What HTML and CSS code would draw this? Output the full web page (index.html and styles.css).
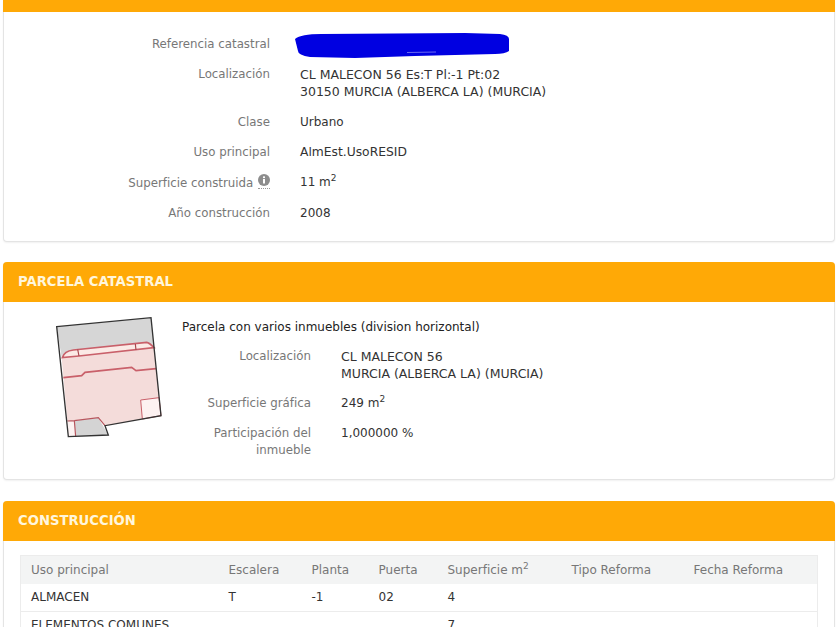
FILE: index.html
```html
<!DOCTYPE html>
<html lang="es">
<head>
    <meta charset="UTF-8">
    <meta name="viewport" content="width=device-width, initial-scale=1.0">
    <title>Sede Catastro</title>
    <link rel="stylesheet" href="styles.css">
</head>
<body>
    <section class="card card-first">
        <div class="card-header card-header-cut"></div>
        <div class="data-list data-list-main">
            <div class="data-row">
                <div class="data-label">Referencia catastral</div>
                <div class="data-value">
                    <svg class="scribble" width="216" height="25" viewBox="0 0 216 25">
                        <path d="M0 6 Q6 1 26 1 L170 0 L205 1 Q214 2 214 6 L214 18 Q210 21 200 21 L120 23 L60 25 L15 24 Q3 22 3 18 Z" fill="#0000e1"/>
                        <path d="M112 19.5 L141 19" stroke="#6a6af0" stroke-width="1" fill="none"/>
                    </svg>
                </div>
            </div>
            <div class="data-row data-row-address">
                <div class="data-label">Localización</div>
                <div class="data-value data-value-caps">CL MALECON 56 Es:T Pl:-1 Pt:02<br>30150 MURCIA (ALBERCA LA) (MURCIA)</div>
            </div>
            <div class="data-row">
                <div class="data-label">Clase</div>
                <div class="data-value">Urbano</div>
            </div>
            <div class="data-row">
                <div class="data-label">Uso principal</div>
                <div class="data-value data-value-mixed">AlmEst.UsoRESID</div>
            </div>
            <div class="data-row">
                <div class="data-label">Superficie construida
                    <span class="info-icon">
                        <svg width="12" height="12" viewBox="0 0 12 12">
                            <circle cx="6" cy="6" r="6" fill="#8d8d8d"/>
                            <rect x="5" y="5" width="2" height="4.5" fill="#fff"/>
                            <rect x="5" y="2.4" width="2" height="1.7" fill="#fff"/>
                        </svg>
                    </span>
                </div>
                <div class="data-value">11 m<sup>2</sup></div>
            </div>
            <div class="data-row">
                <div class="data-label">Año construcción</div>
                <div class="data-value">2008</div>
            </div>
        </div>
    </section>

    <section class="card card-parcel">
        <h2 class="card-header">PARCELA CATASTRAL</h2>
        <div class="parcel-body">
            <svg class="parcel-map" width="150" height="145" viewBox="0 0 450 435">
                <polygon points="80,65 363,38 372,125 95,158" fill="#d6d6d6"/>
                <polygon points="95,158 372,125 393,332 225,362 205,338 112,348" fill="#f4dcda"/>
                <polygon points="112,348 133,347 137,395 115,395" fill="#fdf3f2"/>
                <polygon points="133,347 205,338 235,390 137,395" fill="#d4d4d4"/>
                <polygon points="332,285 387,278 393,332 337,342" fill="#fdf1f1" stroke="#c9606a" stroke-width="3"/>
                <path d="M97 158 Q103 138 130 135 L350 112 Q358 113 372 128 L147 153 Z" fill="#fbeae6" stroke="#c9606a" stroke-width="5"/>
                <path d="M143 133 L147 153 M316 117 L318 135" fill="none" stroke="#a8464e" stroke-width="3.5"/>
                <path d="M100 218 L155 212 L165 202 L305 187 L318 197 L378 191" fill="none" stroke="#c9606a" stroke-width="5"/>
                <path d="M112 348 L133 347 L205 338 L225 362 M133 347 L137 395" fill="none" stroke="#b8565e" stroke-width="3.5"/>
                <polygon points="80,65 363,38 393,332 225,362 235,390 115,395" fill="none" stroke="#333" stroke-width="4"/>
            </svg>
            <div class="parcel-info">
                <p class="parcel-title">Parcela con varios inmuebles (division horizontal)</p>
                <div class="data-list">
                    <div class="data-row data-row-parcel">
                        <div class="data-label">Localización</div>
                        <div class="data-value data-value-caps">CL MALECON 56<br>MURCIA (ALBERCA LA) (MURCIA)</div>
                    </div>
                    <div class="data-row data-row-parcel">
                        <div class="data-label">Superficie gráfica</div>
                        <div class="data-value">249 m<sup>2</sup></div>
                    </div>
                    <div class="data-row data-row-parcel">
                        <div class="data-label">Participación del inmueble</div>
                        <div class="data-value">1,000000 %</div>
                    </div>
                </div>
            </div>
        </div>
    </section>

    <section class="card">
        <h2 class="card-header">CONSTRUCCIÓN</h2>
        <div class="table-wrap">
            <table class="build-table">
                <thead>
                    <tr>
                        <th class="col-use">Uso principal</th>
                        <th class="col-stair">Escalera</th>
                        <th class="col-floor">Planta</th>
                        <th class="col-door">Puerta</th>
                        <th class="col-area">Superficie m<sup>2</sup></th>
                        <th class="col-type">Tipo Reforma</th>
                        <th>Fecha Reforma</th>
                    </tr>
                </thead>
                <tbody>
                    <tr>
                        <td>ALMACEN</td>
                        <td>T</td>
                        <td>-1</td>
                        <td>02</td>
                        <td>4</td>
                        <td></td>
                        <td></td>
                    </tr>
                    <tr>
                        <td>ELEMENTOS COMUNES</td>
                        <td></td>
                        <td></td>
                        <td></td>
                        <td>7</td>
                        <td></td>
                        <td></td>
                    </tr>
                </tbody>
            </table>
        </div>
    </section>
</body>
</html>
```

FILE: styles.css
```css
html, body {
    height: 627px;
    overflow: hidden;
}

body {
    font-family: "DejaVu Sans", Verdana, sans-serif;
    font-size: 12px;
    line-height: 17px;
    margin: 0;
    padding: 0 1px 0 3px;
    background-color: #fff;
    color: #333;
}

.card {
    background: white;
    border: 1px solid #e4e4e4;
    border-top: none;
    border-radius: 4px;
    box-shadow: 0 1px 2px rgba(0,0,0,0.06);
    margin-bottom: 21px;
}

.card-first {
    border-radius: 0 0 4px 4px;
    margin-bottom: 20px;
}

.card-header {
    background-color: #ffa906;
    color: #fff6dc;
    font-size: 13.2px;
    font-weight: bold;
    line-height: 40px;
    height: 40px;
    margin: 0 -1px;
    padding: 0 15px;
    border-radius: 4px 4px 0 0;
}

.card-header-cut {
    height: 12px;
    border-radius: 0;
}

.data-list {
    display: flex;
    flex-direction: column;
    gap: 13px;
}

.data-list-main {
    padding: 24px 0 19px;
}

.data-row {
    display: grid;
    grid-template-columns: 266px 1fr;
    column-gap: 30px;
}

.data-row-address {
    margin-bottom: 1px;
}

.data-row-parcel {
    grid-template-columns: 129px 1fr;
}

.data-label {
    color: #777;
    font-size: 11.8px;
    text-align: right;
}

.data-value {
    color: #333;
}

.data-value-caps {
    font-size: 12.5px;
}

.data-value-mixed {
    font-size: 12.3px;
}

.data-value sup, .build-table sup {
    font-size: 9px;
    line-height: 0;
}

.scribble {
    display: block;
    margin: -3px 0 -5px -5px;
}

.info-icon {
    display: inline-block;
    vertical-align: -2px;
    height: 12px;
    margin-left: 1px;
    padding-bottom: 2px;
    border-bottom: 1px dotted #999;
}

.info-icon svg {
    display: block;
}

.parcel-body {
    display: flex;
    padding: 3px 0 20px 26px;
}

.parcel-map {
    flex: none;
    display: block;
}

.parcel-info {
    padding: 14px 0 0 2px;
}

.parcel-title {
    margin: 0 0 12px;
    color: #222;
}

.table-wrap {
    padding: 14px 16px 0;
}

.build-table {
    width: 100%;
    table-layout: fixed;
    border-collapse: collapse;
    border: 1px solid #ececec;
}

.build-table th {
    box-sizing: border-box;
    background: #f3f4f4;
    color: #777;
    font-weight: normal;
    text-align: left;
    height: 28px;
    padding: 2px 10px 0;
}

.build-table td {
    height: 27px;
    padding: 0 10px;
    border-bottom: 1px solid #ececec;
}

.col-use { width: 198px; }
.col-stair { width: 83px; }
.col-floor { width: 67px; }
.col-door { width: 69px; }
.col-area { width: 124px; }
.col-type { width: 122px; }
```
